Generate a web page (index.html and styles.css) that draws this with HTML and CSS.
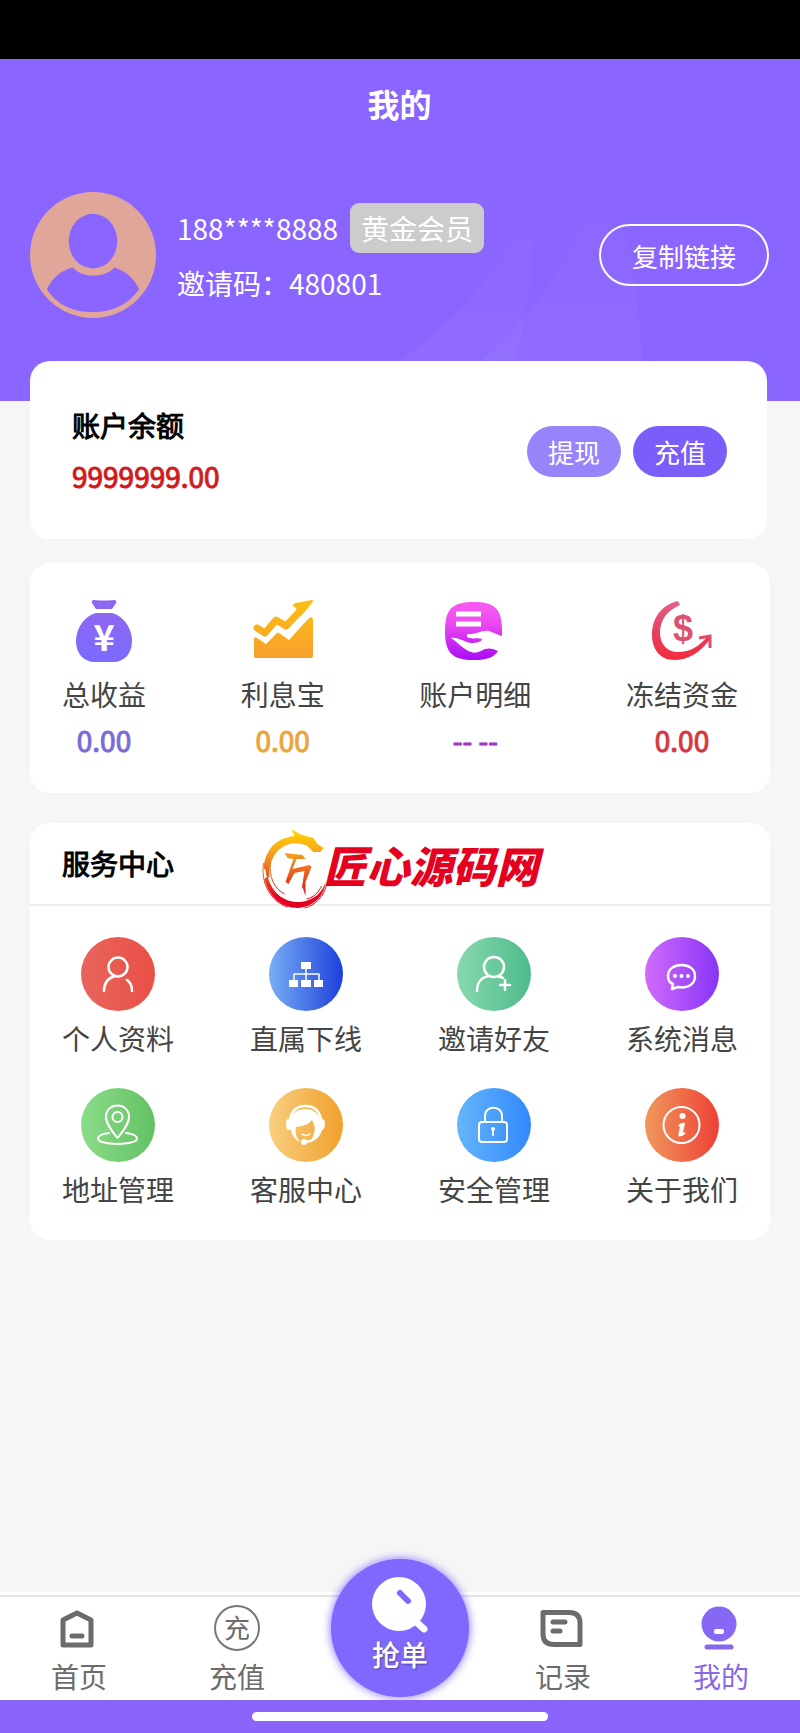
FILE: index.html
```html
<!DOCTYPE html>
<html lang="zh-CN">
<head>
  <meta charset="UTF-8">
  <meta name="viewport" content="width=device-width, initial-scale=1">
  <title>我的</title>
  <link rel="stylesheet" href="styles.css">
</head>
<body>
  <div class="status-bar"></div>

  <header class="header">
    <svg class="header-bg" viewBox="0 0 400 240" aria-hidden="true">
      <defs>
        <linearGradient id="wave" x1="0" y1="0" x2="0" y2="1">
          <stop offset="0" stop-color="#fff" stop-opacity="0"/>
          <stop offset="1" stop-color="#fff" stop-opacity=".05"/>
        </linearGradient>
      </defs>
      <path d="M132 20 C138 90 130 150 104 240 H-60 C40 180 115 110 132 20Z" fill="url(#wave)"/>
      <path d="M198 0 C228 60 242 130 243 240 H30 C120 180 180 100 198 0Z" fill="url(#wave)"/>
    </svg>
    <h1>我的</h1>
    <div class="user">
      <svg class="avatar" viewBox="0 0 127 127" aria-hidden="true">
        <circle cx="63.5" cy="63.5" r="63.5" fill="#e0a699"/>
        <ellipse cx="63.5" cy="49.5" rx="24.5" ry="27.5" fill="#8b65ff"/>
        <path d="M17 98 C22 87 31 79 43 76 C53 87 75 87 85 76 C97 80 105 87 110 98 C98 115 81 121 63 121 C45 121 28 115 17 98Z" fill="#8b65ff"/>
      </svg>
      <div class="user-info">
        <div class="phone"><span>188****8888</span><span class="level">黄金会员</span></div>
        <div class="invite">邀请码：480801</div>
      </div>
      <button type="button" class="btn-copy">复制链接</button>
    </div>
  </header>

  <main>
    <section class="card balance">
      <div>
        <h2>账户余额</h2>
        <p class="amount">9999999.00</p>
      </div>
      <div class="actions">
        <button type="button" class="btn btn-light">提现</button>
        <button type="button" class="btn">充值</button>
      </div>
    </section>

    <section class="card stats">
      <a href="#" class="stat">
        <svg viewBox="0 0 64 64" aria-hidden="true">
          <defs>
            <linearGradient id="bag" x1="0" y1="0" x2="0" y2="1">
              <stop offset="0" stop-color="#9066f2"/>
              <stop offset="1" stop-color="#7a6bff"/>
            </linearGradient>
          </defs>
          <path d="M22 1 Q32 2 42 1 Q45 1 44 4 L40 10 H24 L20 4 Q19 1 22 1Z" fill="#8b66f0"/>
          <path d="M24 14 H40 C52 17 60 30 60 42 C60 55 52 63 41 63 H23 C12 63 4 55 4 42 C4 30 12 17 24 14Z" fill="url(#bag)"/>
          <text x="32" y="52" class="sign sign-yuan">¥</text>
        </svg>
        <span class="name">总收益</span>
        <span class="value purple">0.00</span>
      </a>
      <a href="#" class="stat">
        <svg viewBox="0 0 64 64" aria-hidden="true">
          <defs>
            <linearGradient id="chart" x1="0" y1="0" x2="0" y2="64" gradientUnits="userSpaceOnUse">
              <stop offset="0" stop-color="#fcc010"/>
              <stop offset="1" stop-color="#f79c30"/>
            </linearGradient>
          </defs>
          <path d="M6 29 L14 34 L25 21 L35 27 L52 9" fill="none" stroke="url(#chart)" stroke-width="7" stroke-linecap="round" stroke-linejoin="round"/>
          <path d="M61 1 Q63 1 61 4 L49 18 L45 9 L42 7 Q41 5 45 4Z" fill="url(#chart)"/>
          <path d="M3 40 Q3 37 6 39 L15 45 L26 34 Q27 33 28 34 L38 41 L57 20 Q62 16 62 21 V57 Q62 59 60 59 H5 Q3 59 3 57Z" fill="url(#chart)"/>
        </svg>
        <span class="name">利息宝</span>
        <span class="value orange">0.00</span>
      </a>
      <a href="#" class="stat">
        <svg viewBox="0 0 64 64" aria-hidden="true">
          <defs>
            <linearGradient id="detail" x1="0" y1="0" x2="0" y2="1">
              <stop offset="0" stop-color="#f95cf0"/>
              <stop offset=".35" stop-color="#ee4bf0"/>
              <stop offset="1" stop-color="#a90cf5"/>
            </linearGradient>
          </defs>
          <path d="M31 3 C52 3 59 10 59 32 C59 54 52 61 31 61 C9 61 2 54 2 32 C2 10 9 3 31 3Z" fill="url(#detail)"/>
          <path d="M13 15 H38 M13 25 H38" stroke="#fff" stroke-width="5"/>
          <path d="M8 39 C16 38 20 43 28 44 C34 44 38 43 39 40 C34 38 29 41 24 38 V35 C33 36 38 31 46 32 L61 38 L57 53 C50 49 46 49 42 50 C37 52 34 55 28 53 C19 50 15 43 8 39Z" fill="#fff"/>
        </svg>
        <span class="name">账户明细</span>
        <span class="value violet">-- --</span>
      </a>
      <a href="#" class="stat">
        <svg viewBox="0 0 64 64" aria-hidden="true">
          <defs>
            <linearGradient id="frozen" x1="0" y1="0" x2="0" y2="64" gradientUnits="userSpaceOnUse">
              <stop offset="0" stop-color="#e3628f"/>
              <stop offset=".6" stop-color="#e93a58"/>
              <stop offset="1" stop-color="#f52a3c"/>
            </linearGradient>
          </defs>
          <path d="M28 2 L30 6 C16 12 10 22 10 34 C10 46 18 53 28 53 C40 53 48 48 57 38 L60 40 C50 54 38 61 24 61 C10 61 2 50 2 36 C2 18 12 6 28 2Z" fill="url(#frozen)"/>
          <path d="M49 39 L60 37 V49" fill="none" stroke="#e04a68" stroke-width="3"/>
          <text x="33" y="42" class="sign sign-dollar">$</text>
        </svg>
        <span class="name">冻结资金</span>
        <span class="value red">0.00</span>
      </a>
    </section>

    <section class="card service">
      <div class="service-title">
        <h2>服务中心</h2>
        <div class="brand">
          <svg viewBox="0 0 70 82" aria-hidden="true">
            <defs>
              <linearGradient id="brush" x1="0" y1="0" x2="0" y2="82" gradientUnits="userSpaceOnUse">
                <stop offset="0" stop-color="#ffd800"/>
                <stop offset=".3" stop-color="#f7a41c"/>
                <stop offset=".65" stop-color="#e2421c"/>
                <stop offset=".85" stop-color="#e60020"/>
              </linearGradient>
            </defs>
            <g fill="url(#brush)">
              <path d="M2 40 C4 22 14 10 33 8 L30 1 C34 3 37 6 41 7 L52 10 L56 16 L62 20 L59 24 L52 24 L46 18 C35 13 25 15 17 22 C9 30 7 42 8 50 L5 48 L4 42Z"/>
              <path d="M6 48 C10 64 22 75 39 74 C52 73 61 64 64 54 C63 69 51 79 36 80 C20 80 7 68 3 51Z"/>
              <path d="M23 25 L41 27 L44 31 L35 31 L31 41 L48 37 L50 39 L44 54 L44 68 L41 59 L40 62 L43 43 L33 45 L27 56 L24 54 L32 31 L26 30Z"/>
            </g>
            <path d="M2 35 C-1 55 9 73 26 79 M9 34 C7 49 13 61 23 66 M65 57 C62 69 54 77 43 80 M60 58 C57 65 51 70 45 71" fill="none" stroke="url(#brush)"/>
          </svg>
          <span>匠心源码网</span>
        </div>
      </div>
      <nav class="service-list">
        <a href="#">
          <span class="icon icon-profile">
            <svg viewBox="0 0 74 74" aria-hidden="true"><circle cx="37" cy="30" r="9.5"/><path d="M34 39 C27 41 23 46 23 54 M46 43 C49 45 51 49 51 54"/></svg>
          </span>
          个人资料
        </a>
        <a href="#">
          <span class="icon icon-team">
            <svg viewBox="0 0 74 74" aria-hidden="true"><path class="fine" d="M37 31 V43 M25 43 V37 H50 V43"/><path class="solid" d="M32 25 H42 V32 H32Z M20 43 H29 V50 H20Z M32 43 H42 V50 H32Z M45 43 H54 V50 H45Z"/></svg>
          </span>
          直属下线
        </a>
        <a href="#">
          <span class="icon icon-invite">
            <svg viewBox="0 0 74 74" aria-hidden="true"><circle cx="37" cy="30" r="10"/><path d="M32 39 C25 40 20 45 20 54 M41 39 L46 41 M48 43 V53 M43 48 H53"/></svg>
          </span>
          邀请好友
        </a>
        <a href="#">
          <span class="icon icon-message">
            <svg viewBox="0 0 74 74" aria-hidden="true"><path d="M28 47 L27 52 L33 50 C43 52 50 47 50 39 C50 32 44 28 36.500 28 C29 28 23 32 23 39 C23 43 25 46 28 47Z"/><circle class="solid" cx="30" cy="39" r="2"/><circle class="solid" cx="36.500" cy="39" r="2"/><circle class="solid" cx="43" cy="39" r="2"/></svg>
          </span>
          系统消息
        </a>
        <a href="#">
          <span class="icon icon-address">
            <svg class="thin" viewBox="0 0 74 74" aria-hidden="true"><path d="M36.500 50 C31 43 25 36 25 29 C25 22 30 17.500 36.500 17.500 C43 17.500 48 22 48 29 C48 36 42 43 36.500 50Z"/><circle cx="36.500" cy="29" r="5"/><path d="M28 45 C21 46 17 48 17 50.500 C17 54 26 56 36.500 56 C47 56 56 54 56 50.500 C56 48 52 46 45 45"/></svg>
          </span>
          地址管理
        </a>
        <a href="#">
          <span class="icon icon-support">
            <svg viewBox="0 0 74 74" aria-hidden="true"><path d="M21 31 C23 22 29 18 36.500 18 C44 18 50 22 52 31 M52 41 C50 49 45 53 36 54"/><path class="solid" d="M21 31 H19 Q17 31 17 36 Q17 41 19 42 L22 42 C23 48 27 52 31 54 C27 49 26 45 27 39 C34 38 39 37 43 32 C45 37 47 40 45 45 C44 50 42 52 40 53 C46 51 50 47 51 42 H53 Q56 41 56 36 Q56 31 53 31 H51 C49 25 44 21 36.500 21 C29 21 23 25 21 31Z"/><path class="fine" d="M33 46 Q37 49 41 46"/><circle class="solid" cx="35" cy="54" r="3"/></svg>
          </span>
          客服中心
        </a>
        <a href="#">
          <span class="icon icon-safe">
            <svg class="thin" viewBox="0 0 74 74" aria-hidden="true"><rect x="22" y="34" width="28" height="20" rx="3"/><path d="M28 34 V28 C28 17 45 17 45 28 V34"/><circle class="solid" cx="36" cy="41" r="2"/><path d="M36 41 V47"/></svg>
          </span>
          安全管理
        </a>
        <a href="#">
          <span class="icon icon-about">
            <svg class="thin" viewBox="0 0 74 74" aria-hidden="true"><circle cx="36.500" cy="37" r="18"/><circle class="solid" cx="37.500" cy="28" r="3"/><path class="solid" d="M33 38 C34 36 37 34 40 35 L38 45 L41 44 C39 48 36 49 33 48 L35 39Z"/></svg>
          </span>
          关于我们
        </a>
      </nav>
    </section>
  </main>

  <footer class="footer">
    <nav class="tabbar">
      <a href="#">
        <svg viewBox="0 0 46 46" aria-hidden="true"><path d="M21 8 L35 15 V40 H7 V15Z M16 31 H26"/></svg>
        首页
      </a>
      <a href="#">
        <span class="tab-coin">充</span>
        充值
      </a>
      <a href="#" class="tab-main">
        <svg viewBox="0 0 56 56" aria-hidden="true"><circle cx="27" cy="27" r="27" fill="#fff" stroke="none"/><path d="M40 41 L52 52" stroke="#fff" stroke-width="7"/><path d="M28 16 L36 24" stroke="#8068ff" stroke-width="6"/></svg>
        抢单
      </a>
      <a href="#">
        <svg viewBox="0 0 46 46" aria-hidden="true"><path d="M3 7.500 H29 Q40 7.500 40 18 V39.500 H14 Q3 39.500 3 29Z M13 17 H25 M13 26 H20"/></svg>
        记录
      </a>
      <a href="#" class="active">
        <svg viewBox="0 0 46 46" aria-hidden="true"><circle cx="21" cy="19" r="17.500" fill="#8768f5" stroke="none"/><rect x="16" y="24" width="10" height="5" rx="2" fill="#fff" stroke="none"/><path d="M9 42 H33"/></svg>
        我的
      </a>
    </nav>
    <div class="home-bar"></div>
  </footer>
</body>
</html>
```
FILE: styles.css
```css
* {
  box-sizing: border-box;
}
body {
  display: flex;
  flex-direction: column;
  min-height: 100vh;
  margin: 0;
  background-color: #f6f6f6;
  font-family: "Noto Sans CJK SC", sans-serif;
  font-size: 28px;
  color: #444;
}
a {
  color: inherit;
  text-decoration: none;
}
button {
  font-family: inherit;
  font-size: 26px;
  color: white;
  cursor: pointer;
}
h1, h2, p {
  margin: 0;
}
h2 {
  font-size: 28px;
  font-weight: normal;
  color: #000;
  -webkit-text-stroke: 1px #000;
}
.status-bar {
  height: 59px;
  background: #000;
}

/* header */
.header {
  position: relative;
  padding: 0 31px 83px 30px;
  background: #8b65ff;
  color: white;
}
.header-bg {
  position: absolute;
  right: 0;
  bottom: 0;
  width: 50%;
}
.header h1 {
  font-size: 32px;
  line-height: 88px;
  font-weight: bold;
  text-align: center;
}
.user {
  position: relative;
  display: flex;
  align-items: center;
  padding-top: 45px;
}
.avatar {
  width: 126px;
  height: 126px;
  margin-right: 21px;
}
.user-info {
  flex: 1;
  padding-bottom: 4px;
}
.phone {
  display: flex;
  align-items: center;
  gap: 12px;
  line-height: 50px;
}
.level {
  padding: 0 11px;
  border-radius: 9px;
  background: #ccc;
}
.invite {
  margin-top: 10px;
  line-height: 40px;
}
.btn-copy {
  height: 62px;
  padding: 0 31px;
  border: 2px solid white;
  border-radius: 31px;
  background: none;
}

/* cards */
.card {
  position: relative;
  margin: 0 30px;
  border-radius: 20px;
  background: white;
}
.balance {
  display: flex;
  align-items: center;
  justify-content: space-between;
  margin-top: -40px;
  margin-right: 33px;
  padding: 39px 40px 37px 42px;
  line-height: 51px;
}
.amount {
  color: #d01c1c;
  -webkit-text-stroke: 1px #d01c1c;
}
.actions {
  display: flex;
  gap: 12px;
}
.btn {
  height: 51px;
  padding: 0 21px;
  border: none;
  border-radius: 26px;
  background: #7b5dfa;
}
.btn-light {
  background: #9784fb;
}

.stats {
  display: flex;
  justify-content: space-between;
  margin-top: 24px;
  padding: 36px 32px 30px;
}
.stat {
  display: flex;
  flex-direction: column;
  align-items: center;
  line-height: 46px;
}
.stat svg {
  width: 64px;
  height: 64px;
  margin-bottom: 8px;
}
.sign {
  font-weight: bold;
  text-anchor: middle;
}
.sign-yuan {
  font-size: 36px;
  fill: white;
}
.sign-dollar {
  font-family: "Liberation Sans", sans-serif;
  font-size: 36px;
  fill: #dd5070;
}
.value {
  -webkit-text-stroke: 1px currentColor;
}
.purple {
  color: #7d6bd8;
}
.orange {
  color: #eca53a;
}
.violet {
  color: #a436c2;
}
.red {
  color: #d5383f;
}

.service {
  margin-top: 30px;
}
.service-title {
  padding: 0 32px;
  border-bottom: 2px solid #ececec;
  line-height: 81px;
}
.brand {
  position: absolute;
  top: 5px;
  left: 50%;
  display: flex;
  align-items: flex-start;
  transform: translateX(-50%);
  color: #e60020;
  font-size: 43px;
  font-weight: 900;
  font-style: italic;
  line-height: 72px;
  white-space: nowrap;
}
.brand svg {
  width: 70px;
  height: 82px;
  margin-right: -8px;
}
.service-list {
  display: grid;
  grid-template-columns: repeat(4, auto);
  justify-content: space-between;
  row-gap: 31px;
  padding: 31px 32px 32px;
}
.service-list a {
  display: flex;
  flex-direction: column;
  align-items: center;
  gap: 8px;
  line-height: 38px;
}
.icon {
  width: 74px;
  height: 74px;
  border-radius: 50%;
}
.icon svg {
  display: block;
  fill: none;
  stroke: #fff;
  stroke-width: 2.5;
  stroke-linecap: round;
  stroke-linejoin: round;
}
.icon svg.thin {
  stroke-width: 2;
}
.icon .solid {
  fill: #fff;
  stroke: none;
}
.icon .fine {
  stroke-width: 1.5;
}
.icon-profile {
  background: linear-gradient(to right, #e8655c, #e94f45);
}
.icon-team {
  background: linear-gradient(to right, #78aef5, #1c40da);
}
.icon-invite {
  background: linear-gradient(to right, #88d8ae, #4dbb8c);
}
.icon-message {
  background: linear-gradient(to right, #d06cfb, #8734f6);
}
.icon-address {
  background: linear-gradient(to right, #8bdc88, #63c163);
}
.icon-support {
  background: linear-gradient(to right, #f8cf80, #f0a02c);
}
.icon-safe {
  background: linear-gradient(to right, #64b5fa, #3288fb);
}
.icon-about {
  background: linear-gradient(to right, #f0985c, #ee4036);
}

/* bottom tabs */
.footer {
  margin-top: auto;
  padding-top: 3px;
  background: white;
}
.tabbar {
  display: grid;
  grid-template-columns: 1fr 1fr 168px 1fr 1fr;
  align-items: start;
  justify-items: center;
  padding: 8px 0 3px;
  border-top: 2px solid #e4e4e4;
  color: #6c6c6c;
}
.tabbar a {
  display: flex;
  flex-direction: column;
  align-items: center;
  gap: 6px;
  line-height: 38px;
}
.tabbar svg {
  width: 46px;
  height: 46px;
  fill: none;
  stroke: currentColor;
  stroke-width: 5;
  stroke-linecap: round;
  stroke-linejoin: round;
}
.tab-coin {
  width: 46px;
  height: 46px;
  border: 2px solid #777;
  border-radius: 50%;
  font-size: 26px;
  line-height: 40px;
  text-align: center;
}
.tabbar .active {
  color: #8768e8;
}
.tabbar .tab-main {
  width: 138px;
  height: 138px;
  gap: 4px;
  margin-top: -46px;
  padding-top: 18px;
  border-radius: 50%;
  background: #8068ff;
  box-shadow: 0 0 10px #8068ff;
  color: white;
  font-weight: 500;
  line-height: 34px;
  text-shadow: 1px 1px 2px #554499;
}
.tabbar .tab-main svg {
  width: 56px;
  height: 56px;
}
.home-bar {
  padding: 12px 0;
  background: #8b65fa;
}
.home-bar::before {
  content: "";
  display: block;
  width: 37%;
  height: 9px;
  margin: 0 auto;
  border-radius: 5px;
  background: white;
}
```
